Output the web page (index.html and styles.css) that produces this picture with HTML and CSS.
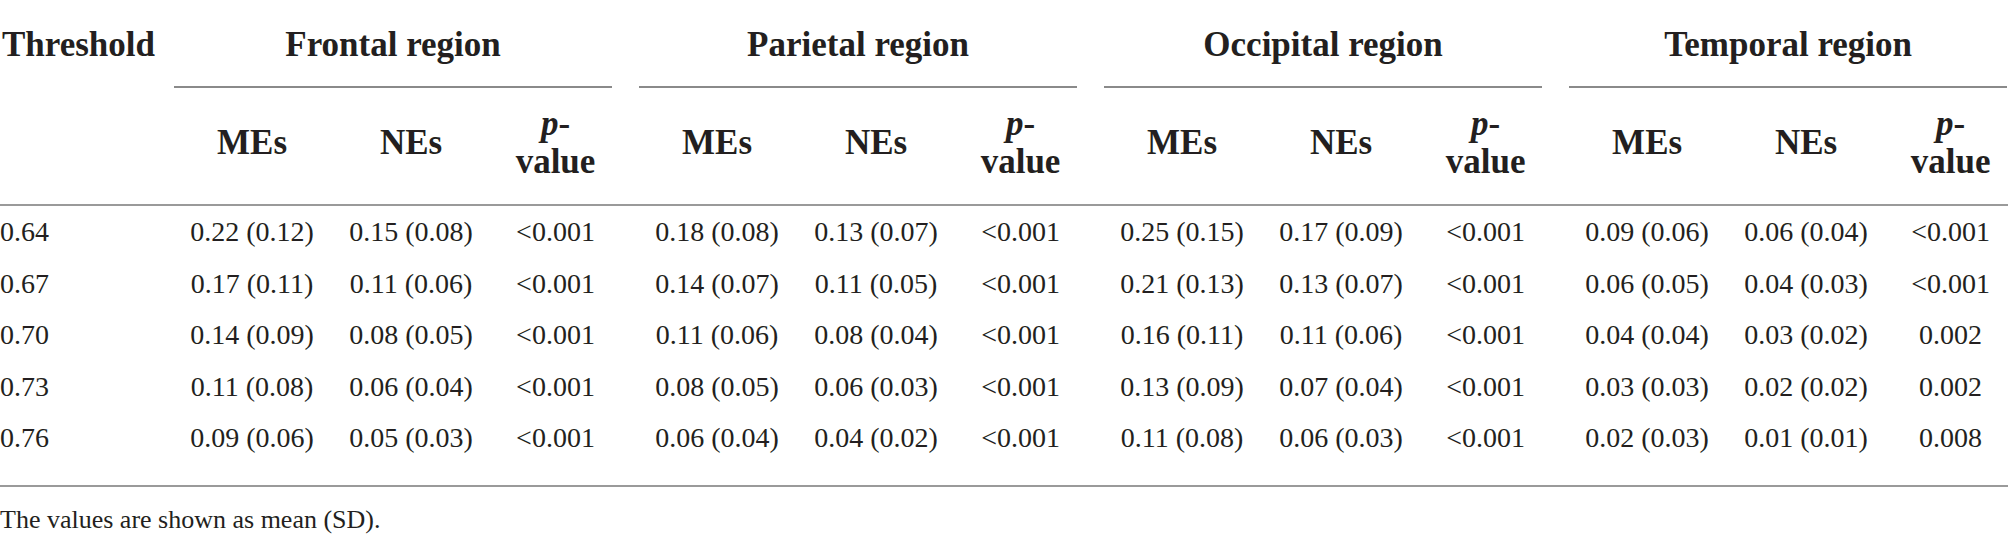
FILE: index.html
```html
<!DOCTYPE html>
<html lang="en">
<head>
<meta charset="utf-8">
<title>Table</title>
<link rel="stylesheet" href="styles.css">
</head>
<body>
<div class="wrap">
<table class="data">
  <colgroup>
    <col class="c-th">
    <col class="c-me"><col class="c-ne"><col class="c-p">
    <col class="c-me"><col class="c-ne"><col class="c-p">
    <col class="c-me"><col class="c-ne"><col class="c-p">
    <col class="c-me"><col class="c-ne"><col class="c-p">
  </colgroup>
  <thead>
    <tr class="hr1">
      <th class="thresh" rowspan="2">Threshold</th>
      <th class="grp" colspan="3"><div class="grp-title">Frontal region</div></th>
      <th class="grp" colspan="3"><div class="grp-title">Parietal region</div></th>
      <th class="grp" colspan="3"><div class="grp-title">Occipital region</div></th>
      <th class="grp" colspan="3"><div class="grp-title">Temporal region</div></th>
    </tr>
    <tr class="hr2">
      <th>MEs</th><th>NEs</th><th class="pv"><i>p</i>-<br>value</th>
      <th>MEs</th><th>NEs</th><th class="pv"><i>p</i>-<br>value</th>
      <th>MEs</th><th>NEs</th><th class="pv"><i>p</i>-<br>value</th>
      <th>MEs</th><th>NEs</th><th class="pv"><i>p</i>-<br>value</th>
    </tr>
  </thead>
  <tbody>
    <tr>
      <td class="first">0.64</td>
      <td>0.22 (0.12)</td><td>0.15 (0.08)</td><td>&lt;0.001</td>
      <td>0.18 (0.08)</td><td>0.13 (0.07)</td><td>&lt;0.001</td>
      <td>0.25 (0.15)</td><td>0.17 (0.09)</td><td>&lt;0.001</td>
      <td>0.09 (0.06)</td><td>0.06 (0.04)</td><td>&lt;0.001</td>
    </tr>
    <tr>
      <td class="first">0.67</td>
      <td>0.17 (0.11)</td><td>0.11 (0.06)</td><td>&lt;0.001</td>
      <td>0.14 (0.07)</td><td>0.11 (0.05)</td><td>&lt;0.001</td>
      <td>0.21 (0.13)</td><td>0.13 (0.07)</td><td>&lt;0.001</td>
      <td>0.06 (0.05)</td><td>0.04 (0.03)</td><td>&lt;0.001</td>
    </tr>
    <tr>
      <td class="first">0.70</td>
      <td>0.14 (0.09)</td><td>0.08 (0.05)</td><td>&lt;0.001</td>
      <td>0.11 (0.06)</td><td>0.08 (0.04)</td><td>&lt;0.001</td>
      <td>0.16 (0.11)</td><td>0.11 (0.06)</td><td>&lt;0.001</td>
      <td>0.04 (0.04)</td><td>0.03 (0.02)</td><td>0.002</td>
    </tr>
    <tr>
      <td class="first">0.73</td>
      <td>0.11 (0.08)</td><td>0.06 (0.04)</td><td>&lt;0.001</td>
      <td>0.08 (0.05)</td><td>0.06 (0.03)</td><td>&lt;0.001</td>
      <td>0.13 (0.09)</td><td>0.07 (0.04)</td><td>&lt;0.001</td>
      <td>0.03 (0.03)</td><td>0.02 (0.02)</td><td>0.002</td>
    </tr>
    <tr class="last">
      <td class="first">0.76</td>
      <td>0.09 (0.06)</td><td>0.05 (0.03)</td><td>&lt;0.001</td>
      <td>0.06 (0.04)</td><td>0.04 (0.02)</td><td>&lt;0.001</td>
      <td>0.11 (0.08)</td><td>0.06 (0.03)</td><td>&lt;0.001</td>
      <td>0.02 (0.03)</td><td>0.01 (0.01)</td><td>0.008</td>
    </tr>
  </tbody>
</table>
<p class="note">The values are shown as mean (SD).</p>
</div>
</body>
</html>
```

FILE: styles.css
```css
html, body {
  margin: 0;
  padding: 0;
  background: #ffffff;
}
body {
  overflow: hidden;
  font-family: "Liberation Serif", "Times New Roman", serif;
  color: #231f20;
}
.wrap {
  width: 2028px;
}
.data {
  table-layout: fixed;
  width: 2024px;
  border-collapse: collapse;
  border-spacing: 0;
}
.c-th { width: 164px; }
.c-me { width: 176px; }
.c-ne { width: 142px; }
.c-p  { width: 147px; }

.data th {
  font-weight: bold;
  font-size: 35px;
  padding: 0;
}
.hr1 th {
  vertical-align: top;
  padding-top: 25px;
  line-height: 40px;
}
.thresh {
  text-align: left;
  padding-left: 2px !important;
  border-bottom: 2px solid #9a9a9a;
}
.grp-title {
  margin: 0 17px 0 10px;
  padding-bottom: 21px;
  border-bottom: 2px solid #8a8a8a;
  text-align: center;
}
.hr2 th {
  height: 117px;
  box-sizing: border-box;
  padding-bottom: 6px;
  line-height: 38px;
  vertical-align: middle;
  text-align: center;
  border-bottom: 2px solid #9a9a9a;
}
.data td {
  font-size: 28px;
  line-height: 51.5px;
  padding: 0;
  text-align: center;
  white-space: nowrap;
}
.data td.first {
  text-align: left;
}
.data tr.last td {
  padding-bottom: 21px;
  border-bottom: 2px solid #9a9a9a;
}
.note {
  margin: 18px 0 0 0;
  font-size: 26px;
  line-height: 30px;
}
```
